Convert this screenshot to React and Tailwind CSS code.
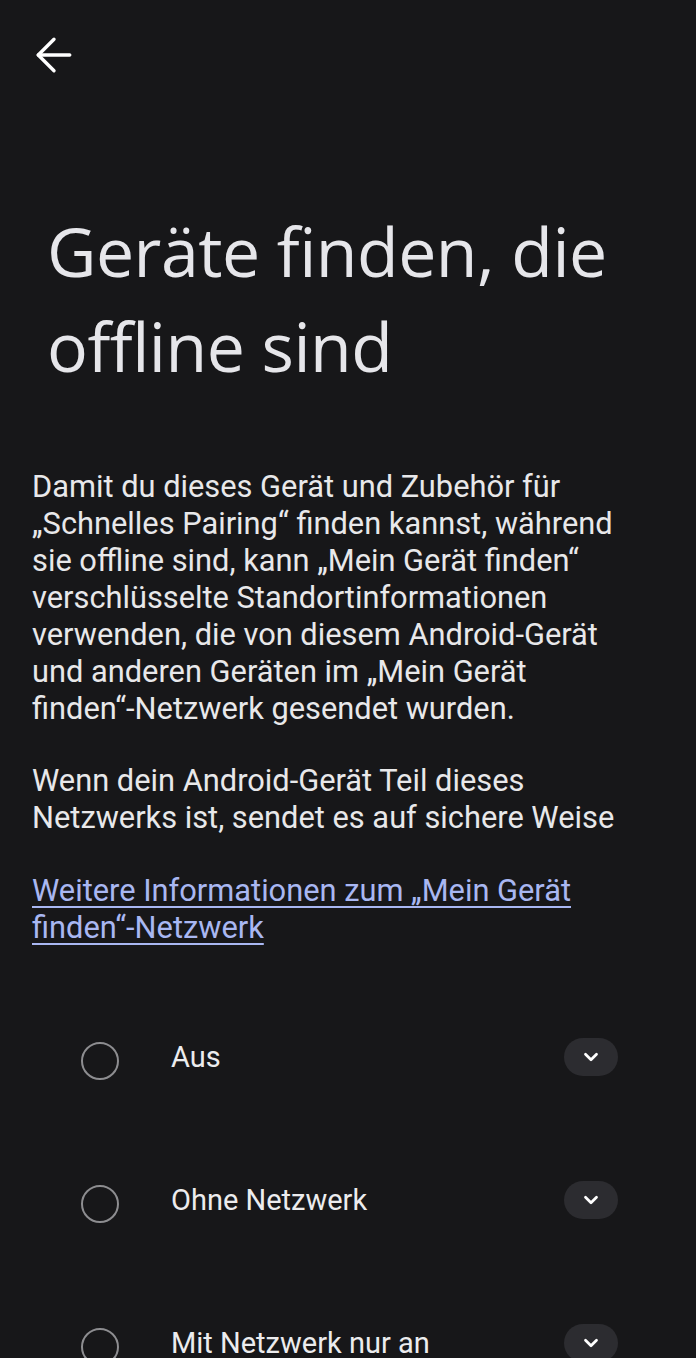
import { ArrowLeft, ChevronDown } from "lucide-react";

const options = ["Aus", "Ohne Netzwerk", "Mit Netzwerk nur an"];

export default function App() {
  return (
    <div className="min-h-[1358px] w-full bg-[#171719] text-[#e6e6e8] overflow-hidden font-['Roboto',sans-serif]">
      {/* top bar */}
      <div className="h-[110px] pl-[27px] pt-[28px]">
        <ArrowLeft size={54} strokeWidth={1.5} className="text-white" />
      </div>

      {/* title */}
      <h1 className="pl-[47px] pr-6 mt-[93px] text-[68px] leading-[95px] font-['Open_Sans',sans-serif] text-[#e6e6ea] tracking-[-0.5px]">
        Geräte finden, die offline sind
      </h1>

      {/* body */}
      <div className="pl-[32px] pr-[64px] mt-[75px] text-[30.8px] leading-[37px] text-[#e8e8ea]">
        <p>
          Damit du dieses Gerät und Zubehör für „Schnelles Pairing“ finden kannst, während sie offline sind, kann „Mein Gerät finden“ verschlüsselte Standortinformationen verwenden, die von diesem Android-Gerät und anderen Geräten im „Mein Gerät{" "}
          <span className="whitespace-nowrap">finden“-Netzwerk</span> gesendet wurden.
        </p>
        <p className="mt-[35px]">
          Wenn dein Android-Gerät Teil dieses Netzwerks ist, sendet es auf sichere Weise
        </p>
        <p className="mt-[36px]">
          <a className="text-[#a9b7f2] underline decoration-[2px] underline-offset-[5px]">
            Weitere Informationen zum „Mein Gerät{" "}
            <span className="whitespace-nowrap">finden“-Netzwerk</span>
          </a>
        </p>
      </div>

      {/* options */}
      <div className="mt-[92px] flex flex-col gap-[105px]">
        {options.map((label) => (
          <div key={label} className="flex items-center h-[38px] pl-[81px] pr-[78px]">
            <div className="w-[38px] h-[38px] mt-[8px] rounded-full border-[2.5px] border-[#8d8d90] shrink-0" />
            <span className="ml-[52px] flex-1 text-[29px] text-[#ececee] mt-[2px]">{label}</span>
            <div className="w-[54px] h-[38px] rounded-full bg-[#2c2c30] flex items-center justify-center">
              <ChevronDown size={22} strokeWidth={3} className="text-white" />
            </div>
          </div>
        ))}
      </div>
    </div>
  );
}
